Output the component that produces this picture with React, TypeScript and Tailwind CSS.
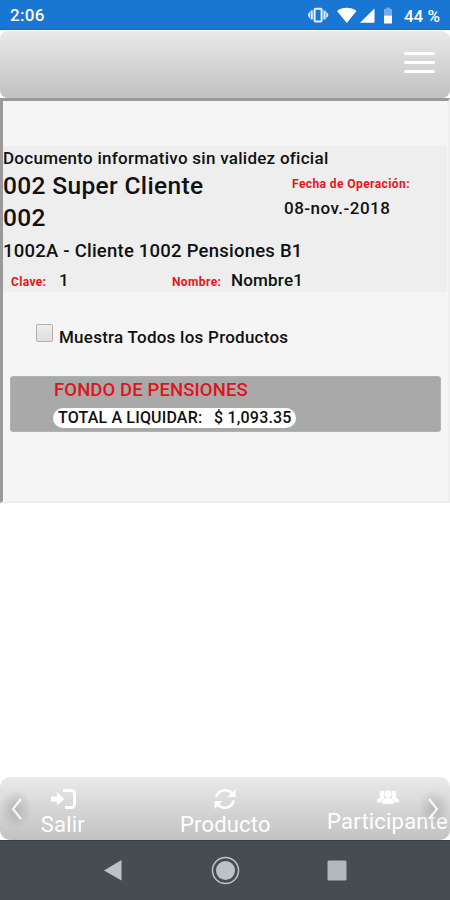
import { useState } from "react";

const StatusBar = () => (
  <header className="flex h-[30px] items-center border-b border-[#1467c4] bg-[#1976d2] pl-2.5 pr-2.5 text-white">
    <span className="pt-[3px] text-[17px] font-medium tracking-[0.3px]">2:06</span>
    <svg className="ml-auto h-[18px] w-[84px]" viewBox="0 0 84 18" fill="#fff">
      <path d="M0 8l2-2.500v7L0 10zM2.600 4.500h2.200v9H2.600zM20.200 8l-2-2.500v7l2-2.500zM15.400 4.500h2.200v9h-2.200z" opacity=".85" />
      <rect x="6.600" y="2.800" width="7" height="12.600" rx="1" fill="none" stroke="#fff" strokeWidth="2" opacity=".9" />
      <path d="M29 5c5.500-4.300 14-4.300 19.500 0l-9.700 12z" />
      <path d="M52 16.700L66.500 2.500v14.200z" />
      <path d="M76 3h2.500V1.500H82V3h2.500v6.500H76z" opacity=".4" />
      <path d="M76 9.500h8.500V17.500H76z" />
    </svg>
    <span className="ml-[12px] pt-[3px] text-[17px] font-medium leading-none">44 %</span>
  </header>
);

const ClientInfo = () => (
  <section className="mr-px h-[146px] bg-[#eeeeee] text-[#111]">
    <p className="h-6 text-[17px] leading-6 tracking-[0.27px]">Documento informativo sin validez oficial</p>
    <div className="flex h-16">
      <h1 className="w-[281px] pr-14 text-[24.5px] font-medium leading-8 tracking-[0.35px]">002 Super Cliente 002</h1>
      <div className="pt-[5px]">
        <p className="pl-[8px] text-xs font-bold leading-[19px] tracking-[0.42px] text-[#e8141c]">Fecha de Operación:</p>
        <p className="text-[17px] leading-7 tracking-[0.48px]">08-nov.-2018</p>
      </div>
    </div>
    <p className="h-[34px] text-[18.5px] leading-[34px] tracking-[0.23px]">1002A - Cliente 1002 Pensiones B1</p>
    <div className="flex h-6 items-baseline text-[17px] leading-6 tracking-[0.2px]">
      <span className="w-14 pl-2 text-xs font-bold tracking-[0.35px] text-[#e8141c]">Clave:</span>
      <span className="w-[112px]">1</span>
      <span className="w-[60px] pl-px text-xs font-bold tracking-[0.4px] text-[#e8141c]">Nombre:</span>
      <span>Nombre1</span>
    </div>
  </section>
);

const ExitIcon = () => (
  <svg className="h-[22px] w-[26px]" viewBox="0 0 26 22">
    <path d="M13 2.500h8.500a3 3 0 0 1 3 3v11a3 3 0 0 1-3 3H15" fill="none" stroke="#fff" strokeWidth="3" />
    <path d="M1 8.500h6V4.500l7.500 6.500-7.500 6.500v-4H1z" fill="#fff" />
  </svg>
);

const RefreshIcon = () => (
  <svg className="h-[22px] w-[24px]" viewBox="0 0 24 22">
    <path d="M3.300 9.500A9 9 0 0 1 19 5.500M20.700 12.500A9 9 0 0 1 5 16.500" fill="none" stroke="#fff" strokeWidth="2.600" />
    <path d="M22.500 1v8h-8zM1.500 21v-8h8z" fill="#fff" />
  </svg>
);

const UsersIcon = () => (
  <svg className="h-[14px] w-[22px]" viewBox="0 0 22 14" fill="#fff">
    <ellipse cx="11" cy="4" rx="3.200" ry="3.900" />
    <ellipse cx="5.100" cy="4" rx="2.500" ry="3.200" />
    <ellipse cx="16.900" cy="4" rx="2.500" ry="3.200" />
    <path d="M5.200 14v-2.500c0-1.800 2.300-2.600 4-3.500h3.600c1.700.9 4 1.700 4 3.500V14zM0 12.500v-2c0-1.500 2-2.200 3.500-3.500h3l1.500 1.300c-2 .7-3.500 1.700-3.500 4.200zM22 12.500v-2c0-1.500-2-2.200-3.500-3.500h-3L14 8.300c2 .7 3.500 1.700 3.500 4.200z" />
  </svg>
);

const BottomTabs = () => (
  <nav className="relative h-[63px] overflow-hidden rounded-[10px] bg-linear-to-b from-[#eaeaea] to-[#c2c2c2] text-[22px] leading-[26px] tracking-[0.2px] text-white">
    <div className="flex h-full">
      <button type="button" className="flex w-[126px] flex-col items-center pt-[11px]">
        <ExitIcon />
        <span className="pt-0.5">Salir</span>
      </button>
      <button type="button" className="flex w-[200px] flex-col items-center pt-[11px]">
        <RefreshIcon />
        <span className="pt-0.5">Producto</span>
      </button>
      <button type="button" className="flex w-[125px] shrink-0 flex-col items-center pt-[13px]">
        <UsersIcon />
        <span className="pt-[5px]">Participante</span>
      </button>
    </div>
    <div className="absolute left-0 top-3 h-10 w-8 bg-[radial-gradient(closest-side,rgba(100,100,100,0.28),transparent)]">
      <svg className="h-10 w-8" viewBox="0 0 32 40">
        <path d="M21 10l-8 10 8 10" fill="none" stroke="#fff" strokeWidth="2.300" opacity=".85" />
      </svg>
    </div>
    <div className="absolute right-0 top-3 h-10 w-8 bg-[radial-gradient(closest-side,rgba(100,100,100,0.28),transparent)]">
      <svg className="h-10 w-8" viewBox="0 0 32 40">
        <path d="M11 10l8 10-8 10" fill="none" stroke="#fff" strokeWidth="2.300" opacity=".85" />
      </svg>
    </div>
  </nav>
);

const SystemNav = () => (
  <div className="flex h-[60px] items-center justify-center bg-[#464d52]">
    <svg className="h-[60px] w-[450px]" viewBox="0 0 450 60">
      <path d="M0 .5h450" stroke="#35413f" />
      <path d="M104 30.500L121.500 20v20.500z" fill="#bcc3c5" />
      <circle cx="225.500" cy="30.500" r="13" fill="none" stroke="#bcc3c5" strokeWidth="1.500" />
      <circle cx="225.500" cy="30.500" r="9.500" fill="#bcc3c5" />
      <rect x="327.500" y="20.500" width="19" height="20" rx="1.500" fill="#b2b9bb" />
    </svg>
  </div>
);

export default function App() {
  const [showAll, setShowAll] = useState(false);

  return (
    <div className="flex h-[900px] w-[450px] flex-col overflow-hidden bg-white font-['Roboto',sans-serif]">
      <StatusBar />
      <div className="mt-px flex h-[67px] items-start justify-end rounded-lg bg-linear-to-b from-[#eaeaea] to-[#c1c1c1] pr-[15px] pt-[21px]">
        <button type="button" aria-label="Menú" className="flex w-[31px] flex-col gap-1.5">
          <span className="h-[3px] rounded-sm bg-white" />
          <span className="h-[3px] rounded-sm bg-white" />
          <span className="h-[3px] rounded-sm bg-white" />
        </button>
      </div>

      <main className="h-[405px] border-b-2 border-l-3 border-r-2 border-t-3 border-b-[#eeeeee] border-l-[#9a9a9a] border-r-[#eeeeee] border-t-[#999] bg-[#f5f5f5] pt-[45px] font-medium text-[#111]">
        <ClientInfo />
        <label className="mt-8 flex h-[26px] pl-[33px] text-[17px] leading-[26px] tracking-[0.25px]">
          <input
            type="checkbox"
            checked={showAll}
            onChange={(e) => setShowAll(e.target.checked)}
            className="mr-1.5 h-[18px] w-[17px] appearance-none rounded-[2px] border border-[#b0b0b0] bg-linear-to-b from-[#eeeeee] to-[#dedede]"
          />
          Muestra Todos los Productos
        </label>
        <section className="ml-[7px] mr-[7px] mt-[26px] h-[56px] rounded-[3px] border border-[#b2b2b2] bg-[#a9a9a9] pl-[42px]">
          <h2 className="h-[31px] pl-px text-[18.5px] leading-[26px] tracking-[0.1px] text-[#e0141c]">FONDO DE PENSIONES</h2>
          <p className="flex h-5 w-[243px] rounded-full bg-white pl-[5px] text-base leading-[19px]">
            <span className="w-[156px] tracking-[0.17px]">TOTAL A LIQUIDAR:</span>
            <span className="tracking-[0.2px]">$ 1,093.35</span>
          </p>
        </section>
      </main>

      <div className="flex-1" />
      <BottomTabs />
      <SystemNav />
    </div>
  );
}
